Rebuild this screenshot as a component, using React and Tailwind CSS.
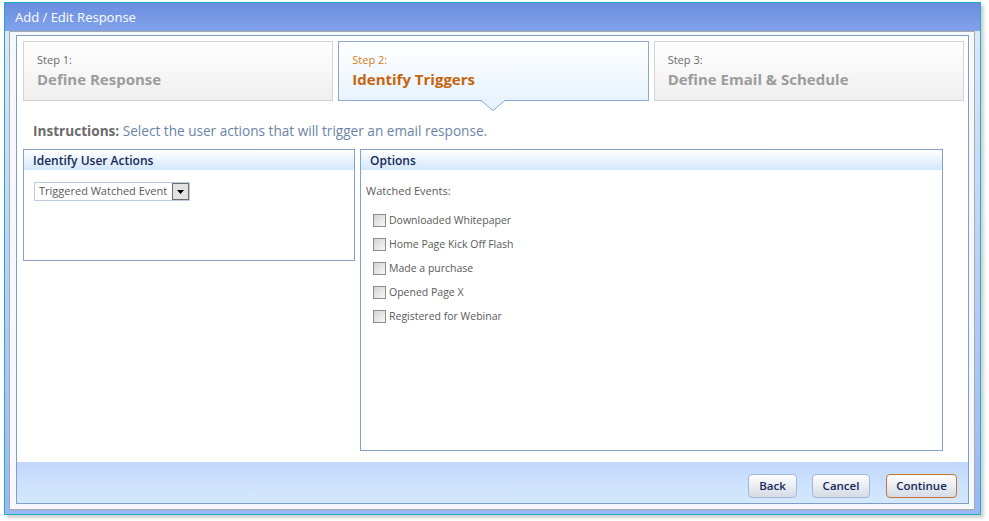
import React from "react";

const F = { fontFamily: '"Open Sans", "Liberation Sans", sans-serif' };

function Step({ n, title, active }) {
  return (
    <div className="relative flex-1">
      <div
        className={
          "h-[60px] border pl-[13px] pt-[11px] " +
          (active
            ? "border-[#8ea7d2] bg-gradient-to-b from-white to-[#e8f3fd]"
            : "border-[#d3d3d3] bg-gradient-to-b from-white to-[#efefef]")
        }
      >
        <div className={"text-[11px] leading-[14px] " + (active ? "text-[#d77a20]" : "text-[#6a6a6a]")}>
          Step {n}:
        </div>
        <div className={"mt-[3px] text-[15px] font-bold leading-[18px] " + (active ? "text-[#c8640c]" : "text-[#9c9c9c]")}>
          {title}
        </div>
      </div>
      {active && (
        <svg className="absolute left-1/2 top-[59px] -translate-x-1/2" width="24" height="11" viewBox="0 0 24 11">
          <path d="M0 0.5 L12 10.5 L24 0.5" fill="#e8f3fd" stroke="#8ea7d2" strokeWidth="1" />
          <rect x="1" y="0" width="22" height="1" fill="#e8f3fd" />
        </svg>
      )}
    </div>
  );
}

function Panel({ title, className, children }) {
  return (
    <div className={"border border-[#86a0cc] bg-white " + className}>
      <div className="h-[20px] bg-gradient-to-b from-white to-[#d3e7fb] pl-[9px] pt-[1px] text-[12px] font-semibold leading-[20px] text-[#14295a]">
        {title}
      </div>
      {children}
    </div>
  );
}

function Check({ label }) {
  return (
    <div className="flex h-[24px] items-center">
      <div className="h-[13px] w-[13px] border border-[#8c8c8c] bg-gradient-to-br from-[#d4d4d4] to-[#f6f6f6]" />
      <span className="ml-[3px] text-[10.5px] text-[#5a5a5a]">{label}</span>
    </div>
  );
}

function Btn({ children, primary, w }) {
  return (
    <div
      className={
        "flex h-[24px] items-center justify-center rounded-[4px] border bg-gradient-to-b from-white to-[#d5dae4] text-[11.5px] font-semibold text-[#16295a] " +
        (primary ? "border-[#c8742c]" : "border-[#a4b7db]") +
        " " +
        w
      }
    >
      {children}
    </div>
  );
}

export default function App() {
  return (
    <div className="h-[521px] w-[989px] bg-white pl-[4px] pt-[2px]" style={F}>
      <div className="flex h-[513px] w-[977px] flex-col border border-[#19adc6] shadow-[3px_3px_3px_rgba(0,0,0,0.18)]">
        <div className="h-[28px] shrink-0 bg-gradient-to-b from-[#6a8de0] to-[#82a3ea] pl-[10px] pt-[6px] text-[13px] leading-[16px] text-white">
          Add / Edit Response
        </div>
        <div className="flex flex-1 flex-col bg-gradient-to-b from-[#dce8f8] to-[#98b7f4] pb-[4px] pl-[4px] pr-[5px]">
          <div className="flex flex-1 flex-col border border-[#a9a9a9] bg-[#f5f8fd] pb-[5px] pl-[6px] pr-[5px] pt-[3px]">
            <div className="flex flex-1 flex-col border border-[#7f9dc9] bg-white">
              <div className="flex gap-[5px] pl-[6px] pr-[4px] pt-[5px]">
                <Step n={1} title="Define Response" />
                <Step n={2} title="Identify Triggers" active />
                <Step n={3} title="Define Email & Schedule" />
              </div>
              <div className="ml-[16px] mt-[21px] text-[13.6px] leading-[18px] text-[#6a84a6]">
                <span className="font-bold text-[#6b6b6b]">Instructions:</span> Select the user actions that will trigger an email response.
              </div>
              <div className="mt-[9px] flex gap-[5px] pl-[6px]">
                <Panel title="Identify User Actions" className="h-[112px] w-[332px]">
                  <div className="ml-[10px] mt-[12px] flex h-[19px] w-[156px] items-center border border-[#bccbdf] pl-[4px]">
                    <span className="flex-1 text-[11px] text-[#5a5a5a]">Triggered Watched Event</span>
                    <div className="flex h-[17px] w-[17px] items-center justify-center border border-[#6e6e6e] bg-[#e2e2e2]">
                      <svg width="7" height="4" viewBox="0 0 7 4"><path d="M0 0 H7 L3.5 4 Z" fill="#000" /></svg>
                    </div>
                  </div>
                </Panel>
                <Panel title="Options" className="h-[302px] w-[583px]">
                  <div className="ml-[5px] mt-[13px] text-[11px] text-[#5a5a5a]">Watched Events:</div>
                  <div className="ml-[12px] mt-[9px] flex flex-col">
                    <Check label="Downloaded Whitepaper" />
                    <Check label="Home Page Kick Off Flash" />
                    <Check label="Made a purchase" />
                    <Check label="Opened Page X" />
                    <Check label="Registered for Webinar" />
                  </div>
                </Panel>
              </div>
              <div className="flex-1" />
              <div className="flex h-[41px] items-start justify-end bg-gradient-to-b from-[#c1d8fb] to-[#d5e8fd] pr-[11px] pt-[12px]">
                <Btn w="w-[49px]">Back</Btn>
                <div className="w-[15px]" />
                <Btn w="w-[58px]">Cancel</Btn>
                <div className="w-[16px]" />
                <Btn w="w-[71px]" primary>Continue</Btn>
              </div>
            </div>
          </div>
        </div>
      </div>
    </div>
  );
}
